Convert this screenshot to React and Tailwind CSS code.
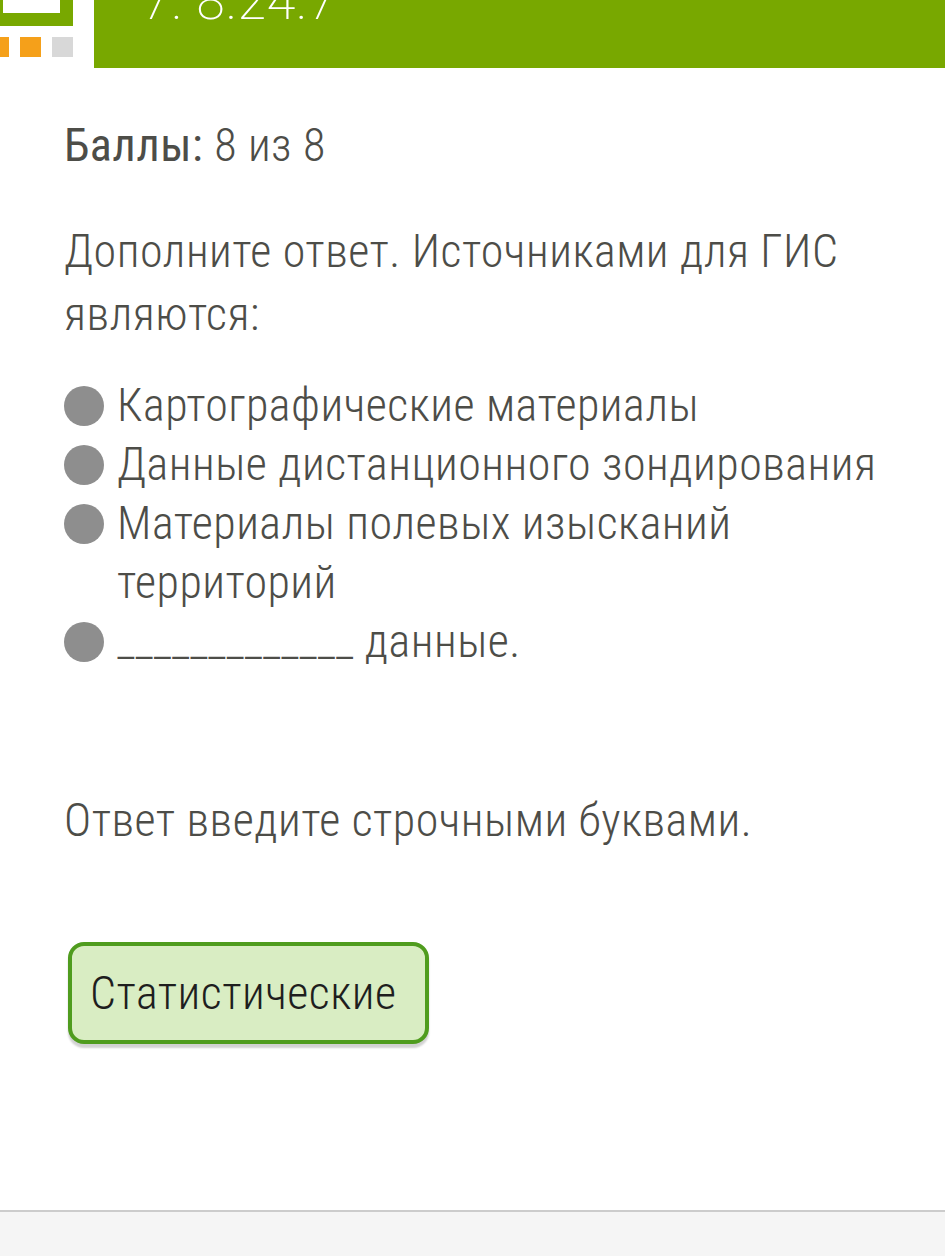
// Страница результата теста: баллы, вопрос и ответ

const items = [
  'Картографические материалы',
  'Данные дистанционного зондирования',
  'Материалы полевых изысканий территорий',
  '_____________ данные.',
];

export default function App() {
  return (
    <div className="w-[945px] h-[1256px] bg-white flex flex-col overflow-hidden font-['Roboto',sans-serif] text-[#4d4d48]">
      <header className="flex h-[68px] shrink-0">
        <div className="w-[94px] shrink-0 flex flex-col">
          <div className="w-[73px] h-[26px] bg-[#78a800] pl-[3px]">
            <div className="w-[57px] h-[13px] bg-white" />
          </div>
          <div className="flex mt-[11px] h-[20px]">
            <div className="w-[9px] bg-[#f5a01a]" />
            <div className="w-[21px] ml-[11px] bg-[#f5a01a]" />
            <div className="w-[21px] ml-[11px] bg-[#d8d8d8]" />
          </div>
        </div>
        <div className="flex-1 bg-[#78a800] relative overflow-hidden">
          <span className="absolute left-[48px] top-[-24px] text-white font-extralight text-[52px] leading-none tracking-[0.5px]">
            7. 8.24.7
          </span>
        </div>
      </header>

      <main className="flex-1 pl-[64px] pr-[30px] [font-stretch:condensed] tracking-[0.5px]">
        <p className="mt-[48px] text-[46px] leading-[58px] font-light">
          <span className="font-normal">Баллы:</span> 8 из 8
        </p>

        <p className="mt-[46px] text-[46px] leading-[63px] font-light">
          Дополните ответ. Источниками для ГИС являются:
        </p>

        <ul className="mt-[30px] flex flex-col">
          {items.map((t) => (
            <li key={t} className="flex items-start text-[46px] leading-[59px] font-light">
              <span className="w-[40px] h-[40px] rounded-full bg-[#8e8e8e] shrink-0 mt-[10px] mr-[13px]" />
              <span className="w-[780px]">
                {t === items[2] ? (
                  <>Материалы полевых изысканий<br />территорий</>
                ) : t}
              </span>
            </li>
          ))}
        </ul>

        <p className="mt-[120px] text-[46px] leading-[58px] font-light">
          Ответ введите строчными буквами.
        </p>

        <div className="mt-[93px] ml-[4px] inline-flex items-center h-[102px] pl-[18px] pr-[28px] bg-[#d9edc3] border-[4px] border-[#4f9c1e] rounded-[16px] shadow-[0_4px_2px_rgba(0,0,0,0.18)]">
          <span className="text-[46px] font-light text-[#1e1e1e]">Статистические</span>
        </div>
      </main>

      <footer className="h-[46px] shrink-0 bg-[#f5f5f5] border-t-[2px] border-[#cccccc]" />
    </div>
  );
}
